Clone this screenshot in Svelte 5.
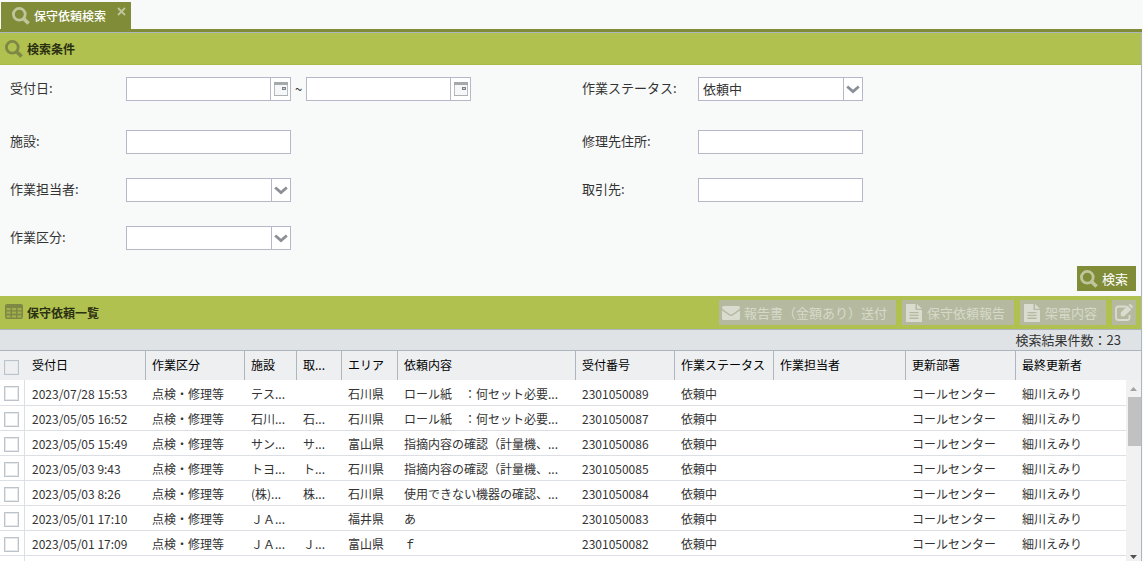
<script lang="ts">
  type Col = { label: string; width?: number };
  const columns: Col[] = [
    { label: '受付日', width: 120 },
    { label: '作業区分', width: 99 },
    { label: '施設', width: 52 },
    { label: '取...', width: 45 },
    { label: 'エリア', width: 56 },
    { label: '依頼内容', width: 178 },
    { label: '受付番号', width: 99 },
    { label: '作業ステータス', width: 99 },
    { label: '作業担当者', width: 132 },
    { label: '更新部署', width: 110 },
    { label: '最終更新者' }
  ];

  const kind = '点検・修理等';
  const status = '依頼中';
  const dept = 'コールセンター';
  const person = '細川えみり';
  const rows: string[][] = [
    ['2023/07/28 15:53', kind, 'テス...', '', '石川県', 'ロール紙　：何セット必要...', '2301050089', status, '', dept, person],
    ['2023/05/05 16:52', kind, '石川...', '石...', '石川県', 'ロール紙　：何セット必要...', '2301050087', status, '', dept, person],
    ['2023/05/05 15:49', kind, 'サン...', 'サ...', '富山県', '指摘内容の確認（計量機、...', '2301050086', status, '', dept, person],
    ['2023/05/03 9:43', kind, 'トヨ...', 'ト...', '石川県', '指摘内容の確認（計量機、...', '2301050085', status, '', dept, person],
    ['2023/05/03 8:26', kind, '(株)...', '株...', '石川県', '使用できない機器の確認、...', '2301050084', status, '', dept, person],
    ['2023/05/01 17:10', kind, 'ＪＡ...', '', '福井県', 'あ', '2301050083', status, '', dept, person],
    ['2023/05/01 17:09', kind, 'ＪＡ...', 'Ｊ...', '富山県', 'ｆ', '2301050082', status, '', dept, person]
  ];

  let statusValue = $state('依頼中');
</script>

{#snippet search()}
  <svg class="icon" viewBox="0 0 18 18" aria-hidden="true">
    <circle cx="7.3" cy="7.3" r="5.9" fill="none" stroke="currentColor" stroke-width="2.8" />
    <path d="M11.4 11.4L16.6 16.6" stroke="currentColor" stroke-width="3.6" />
  </svg>
{/snippet}

{#snippet doc()}
  <svg class="icon" viewBox="0 0 18 18" aria-hidden="true">
    <path d="M1 0H10.5V6H17V18H1ZM12 0L17 4.8H12ZM4.5 8V9.3H13.5V8ZM4.5 10.8V12.1H13.5V10.8ZM4.5 13.6V14.9H13.5V13.6Z" fill="currentColor" fill-rule="evenodd" />
  </svg>
{/snippet}

{#snippet chevron()}
  <svg class="chevron" viewBox="0 0 18 22" aria-hidden="true">
    <path d="M3.2 8.5L9 13.6L14.8 8.5" fill="none" stroke="#8b9097" stroke-width="2.8" />
  </svg>
{/snippet}

{#snippet dateField(id: string, label: string)}
  <div class="field">
    <input {id} type="text" aria-label={label} />
    <button class="trigger" type="button" aria-label="カレンダー">
      <svg class="calendar" viewBox="0 0 14 14" aria-hidden="true">
        <rect x="0.5" y="0.5" width="13" height="13" fill="#f6f7f8" stroke="#b9bcbf" />
        <path d="M0 0H14V3H0Z" fill="#a6a9ac" />
        <path d="M0 13.5H14" stroke="#aeb1b4" />
        <rect x="8.5" y="5.5" width="3" height="2" fill="#c8ccd2" stroke="#7d8288" />
      </svg>
    </button>
  </div>
{/snippet}

<div class="page">
  <nav class="tabs">
    <div class="tab">
      {@render search()}
      <span>保守依頼検索</span>
      <button class="close" type="button" aria-label="閉じる">
        <svg viewBox="0 0 9 9" aria-hidden="true"><path d="M1 1L8 8M8 1L1 8" stroke="currentColor" stroke-width="1.8" /></svg>
      </button>
    </div>
  </nav>

  <main class="panel">
    <header class="bar">
      <h2>{@render search()}検索条件</h2>
    </header>

    <form class="form" onsubmit={(e) => e.preventDefault()}>
      <div class="fields">
        <div class="column">
          <div class="row">
            <label for="from">受付日:</label>
            {@render dateField('from', '受付日')}
            <span class="tilde">~</span>
            {@render dateField('to', '受付日')}
          </div>
          <div class="row">
            <label for="facility">施設:</label>
            <div class="field"><input id="facility" type="text" /></div>
          </div>
          <div class="row">
            <label for="staff">作業担当者:</label>
            <div class="field">
              <select id="staff"><option value=""></option></select>
              {@render chevron()}
            </div>
          </div>
          <div class="row">
            <label for="kind">作業区分:</label>
            <div class="field">
              <select id="kind"><option value=""></option></select>
              {@render chevron()}
            </div>
          </div>
        </div>
        <div class="column">
          <div class="row">
            <label for="status">作業ステータス:</label>
            <div class="field">
              <select id="status" bind:value={statusValue}><option>依頼中</option></select>
              {@render chevron()}
            </div>
          </div>
          <div class="row">
            <label for="address">修理先住所:</label>
            <div class="field"><input id="address" type="text" /></div>
          </div>
          <div class="row">
            <label for="client">取引先:</label>
            <div class="field"><input id="client" type="text" /></div>
          </div>
        </div>
      </div>
      <div class="actions">
        <button class="button" type="submit">{@render search()}検索</button>
      </div>
    </form>

    <header class="bar list-bar">
      <h2>
        <svg class="icon" viewBox="0 0 18 18" aria-hidden="true">
          <path d="M2 0H16Q18 0 18 2V13Q18 15 16 15H2Q0 15 0 13V2Q0 0 2 0ZM1.6 4V6.2H5.6V4ZM7 4V6.2H11V4ZM12.4 4V6.2H16.4V4ZM1.6 7.6V9.8H5.6V7.6ZM7 7.6V9.8H11V7.6ZM12.4 7.6V9.8H16.4V7.6ZM1.6 11.2V13.4H5.6V11.2ZM7 11.2V13.4H11V11.2ZM12.4 11.2V13.4H16.4V11.2Z" fill="currentColor" fill-rule="evenodd" />
          <path d="M1.6 4H16.4V13.4H1.6Z" fill="currentColor" opacity="0.3" />
        </svg>保守依頼一覧
      </h2>
      <div class="tools">
        <button class="button" type="button" disabled>
          <svg class="icon" viewBox="0 0 18 18" aria-hidden="true">
            <path d="M1.5 2H16.5Q18 2 18 3.5Q18 4.6 16.8 5.5L10.5 10Q9 11 7.5 10L1.2 5.5Q0 4.6 0 3.5Q0 2 1.5 2ZM0 6.4L7 11.3Q9 12.6 11 11.3L18 6.4V14.5Q18 16 16.5 16H1.5Q0 16 0 14.5Z" fill="currentColor" />
          </svg>報告書（金額あり）送付
        </button>
        <button class="button" type="button" disabled>{@render doc()}保守依頼報告</button>
        <button class="button" type="button" disabled>{@render doc()}架電内容</button>
        <button class="button" type="button" disabled aria-label="編集">
          <svg class="icon" viewBox="0 0 18 18" aria-hidden="true">
            <path d="M11.5 2.5H3.5Q1 2.5 1 5V13.5Q1 16 3.5 16H12Q14.5 16 14.5 13.5V11" fill="none" stroke="currentColor" stroke-width="1.8" />
            <path d="M5.8 8.6L12.6 1.8L16.2 5.4L9.4 12.2H5.8ZM13.5 1L14.4 0.3Q15.2 -0.2 16 0.5L17.5 2Q18.2 2.8 17.6 3.6L16.9 4.5Z" fill="currentColor" />
          </svg>
        </button>
      </div>
    </header>

    <div class="count">検索結果件数：23</div>

    <div class="grid">
      <table>
        <colgroup>
          <col style:width="25px" />
          {#each columns as c}
            <col style:width={c.width ? `${c.width}px` : 'auto'} />
          {/each}
        </colgroup>
        <thead>
          <tr>
            <th class="check"><input type="checkbox" aria-label="すべて選択" /></th>
            {#each columns as c}<th scope="col">{c.label}</th>{/each}
          </tr>
        </thead>
        <tbody>
          {#each rows as r}
            <tr>
              <td class="check"><input type="checkbox" aria-label={r[6]} /></td>
              {#each r as cell}<td>{cell}</td>{/each}
            </tr>
          {/each}
          <tr aria-hidden="true">
            <td class="check"></td>
            <td colspan="11"></td>
          </tr>
        </tbody>
      </table>
      <div class="scroll" aria-hidden="true">
        <div class="corner"></div>
        <div class="track">
          <svg class="arrow up" viewBox="0 0 7 4"><path d="M0 4L3.5 0L7 4Z" fill="#a3a3a3" /></svg>
          <div class="thumb"></div>
          <svg class="arrow down" viewBox="0 0 7 4"><path d="M0 0L3.5 4L7 0Z" fill="#505050" /></svg>
        </div>
      </div>
    </div>
  </main>
</div>

<style>
  :global(body) {
    margin: 0;
    background: #f8faf9;
  }
  .page,
  .page :is(button, input, select) {
    font-family: 'Noto Sans CJK JP', sans-serif;
  }
  .page {
    display: flex;
    flex-direction: column;
    height: 100vh;
    overflow: hidden;
    box-sizing: border-box;
    padding-right: 1px;
    font-size: 13px;
    line-height: 20px;
    color: #333;
  }
  .page * {
    box-sizing: border-box;
  }
  button {
    margin: 0;
    padding: 0;
    border: 0;
    background: none;
    color: inherit;
  }
  .icon {
    flex: none;
    width: 18px;
    height: 18px;
  }

  .tabs {
    display: flex;
    flex: none;
    padding: 2px 0 0 1px;
    border-bottom: 3px solid #808c37;
  }
  .tab {
    display: flex;
    width: 130px;
    height: 27px;
    padding-left: 11px;
    align-items: center;
    gap: 4px;
    background: #808c37;
    color: #fff;
    font-size: 12px;
    font-weight: 500;
  }
  .tab .icon {
    color: #bfc69b;
  }
  .close {
    display: flex;
    align-self: flex-start;
    margin: 5px 5px 0 auto;
    color: #bfc69b;
  }
  .close svg {
    width: 9px;
    height: 9px;
  }

  .panel {
    display: flex;
    flex: 1;
    flex-direction: column;
    min-height: 0;
    border: solid #adb6be;
    border-width: 1px 1px 0 0;
  }
  .bar {
    display: flex;
    flex: none;
    height: 32px;
    align-items: center;
    justify-content: space-between;
    padding: 0 5px;
    background: #b0c14f;
    border-bottom: 1px solid #a9bb44;
  }
  .list-bar {
    height: 34px;
    border-color: #adb6be;
  }
  h2 {
    display: flex;
    align-items: center;
    gap: 4px;
    margin: 0;
    color: #2b3013;
    font-size: 12px;
    font-weight: 700;
  }
  h2 .icon {
    color: #7d8845;
  }

  .form {
    flex: none;
    padding: 12px 5px 5px 10px;
  }
  .fields {
    display: grid;
    grid-template-columns: minmax(0, 572px) 1fr;
  }
  .column {
    display: flex;
    flex-direction: column;
    gap: 24px;
  }
  .row {
    display: flex;
    height: 24px;
  }
  .row:first-child {
    margin-bottom: 5px;
  }
  label {
    width: 116px;
    line-height: 22px;
  }
  .field {
    display: flex;
    position: relative;
    width: 165px;
    height: 24px;
    border: 1px solid #b5b8c8;
    background: #fff;
  }
  .field input,
  .field select {
    flex: 1;
    min-width: 0;
    padding: 0 4px 2px;
    border: 0;
    outline: 0;
    appearance: none;
    background: none;
    color: #333;
    font-size: 13px;
  }
  .trigger {
    display: flex;
    width: 20px;
    align-items: center;
    justify-content: center;
    border-left: 1px solid #b5b8c8;
  }
  .calendar {
    width: 14px;
    height: 14px;
  }
  .chevron {
    position: absolute;
    top: 0;
    right: 0;
    width: 19px;
    height: 22px;
    border-left: 1px solid #b5b8c8;
    pointer-events: none;
  }
  .tilde {
    width: 15px;
    padding-top: 2px;
    text-align: center;
  }
  .actions {
    display: flex;
    justify-content: flex-end;
    padding-top: 16px;
  }
  .button {
    display: flex;
    height: 25px;
    align-items: center;
    gap: 4px;
    padding: 0 8px 0 3px;
    background: #808c37;
    color: #fff;
    font-size: 13px;
    line-height: 20px;
  }
  .button .icon {
    color: #bfc69b;
  }
  .tools {
    display: flex;
    gap: 6px;
  }
  .tools .button {
    padding-right: 9px;
    background: #b5b9a0;
    color: #d6d9ca;
  }
  .tools .button .icon {
    color: #d9dccf;
  }
  .tools .button:last-child {
    padding-right: 3px;
  }

  .count {
    flex: none;
    height: 21px;
    padding-right: 20px;
    border-bottom: 1px solid #adb6be;
    background: #dfe3e6;
    text-align: right;
  }

  .grid {
    display: flex;
    flex: 1;
    min-height: 0;
    overflow: hidden;
    background: #fff;
  }
  table {
    flex: 1;
    width: 0;
    align-self: flex-start;
    table-layout: fixed;
    border-collapse: separate;
    border-spacing: 0;
    font-size: 12px;
    line-height: 20px;
  }
  th,
  td {
    overflow: hidden;
    text-align: left;
    white-space: nowrap;
  }
  th {
    height: 29px;
    border-left: 1px solid #adb6be;
    padding: 0 0 2px 6px;
    background: #edeff1;
    color: #000;
    font-weight: 400;
  }
  th.check,
  th.check + th {
    border-left: 0;
  }
  td {
    height: 25px;
    border-bottom: 1px solid #dcdfe4;
    padding: 2px 0 0 7px;
  }
  th.check + th {
    padding-left: 7px;
  }
  tbody tr:first-child td {
    height: 26px;
  }
  th.check,
  td.check {
    padding: 2px 0 0 4px;
  }
  td.check {
    border-right: 1px solid #dcdfe4;
  }
  .check input {
    display: block;
    width: 15px;
    height: 15px;
    margin: 0;
    border: 1px solid #bcc3ca;
    appearance: none;
    background: #fff;
    box-shadow: inset 0 0 0 1px #e6e9ec;
  }
  th.check input {
    margin-top: 2px;
    background: #edeff1;
  }

  .scroll {
    display: flex;
    flex: none;
    flex-direction: column;
    width: 15px;
  }
  .corner {
    height: 29px;
    background: #edeff1;
  }
  .track {
    display: flex;
    flex: 1;
    flex-direction: column;
    align-items: center;
    padding: 7px 0 2px;
    background: #f1f1f1;
  }
  .arrow {
    width: 7px;
    height: 4px;
  }
  .down {
    margin-top: auto;
  }
  .thumb {
    align-self: flex-end;
    width: 13px;
    height: 49px;
    margin-top: 6px;
    background: #c1c1c1;
  }
</style>
